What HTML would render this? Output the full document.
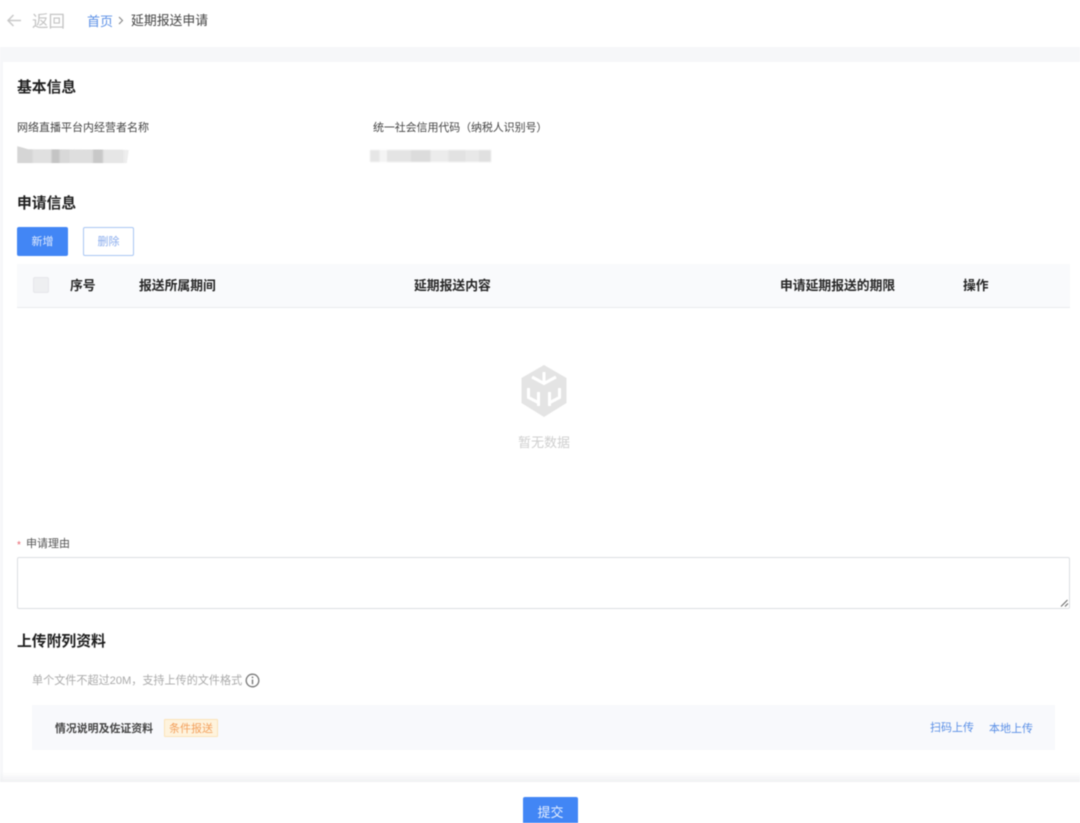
<!DOCTYPE html>
<html lang="zh-CN"><head><meta charset="utf-8"><title>延期报送申请</title>
<style>
html,body{margin:0;padding:0;width:1080px;height:823px;overflow:hidden;background:#fff}
body{position:relative;font-family:"Liberation Sans","Noto Sans CJK SC",sans-serif;color:#333}
.a{position:absolute;white-space:nowrap;line-height:1}
.blk{position:absolute}
#w{position:absolute;left:0;top:0;width:1080px;height:823px;filter:blur(.4px)}
h3{position:absolute;margin:0;font-size:14.8px;font-weight:700;color:#1e1e1e;line-height:1;white-space:nowrap}
.th{position:absolute;top:280px;font-size:12.8px;font-weight:700;color:#262626;line-height:1;white-space:nowrap}
</style></head><body><div id="w">
<div class="blk" style="left:0;top:47px;width:1080px;height:15px;background:#f6f7f9"></div>
<div class="blk" style="left:0;top:62px;width:3px;height:720px;background:#f6f7f9"></div>
<div class="blk" style="left:0;top:772px;width:1080px;height:10px;background:linear-gradient(rgba(241,242,244,0),#f0f1f3)"></div>

<svg class="blk" style="left:6px;top:13px" width="16" height="15" viewBox="0 0 16 15"><path d="M15 7.500H2M7.500 2L2 7.500L7.500 13" fill="none" stroke="#c9c9c9" stroke-width="1.500"/></svg>
<div class="a" style="left:32px;top:14px;font-size:16.500px;line-height:17px;color:#c4c4c4">返回</div>
<div class="a" style="left:87px;top:15px;font-size:13px;color:#5a8fe6">首页</div>
<svg class="blk" style="left:118px;top:16px" width="6" height="9" viewBox="0 0 6 9"><path d="M1 1L4.500 4.500L1 8" fill="none" stroke="#888" stroke-width="1.100"/></svg>
<div class="a" style="left:131px;top:15px;font-size:12.850px;color:#444">延期报送申请</div>

<h3 style="left:17px;top:81px">基本信息</h3>
<div class="a" style="left:17px;top:123px;font-size:11px;color:#444">网络直播平台内经营者名称</div>
<div class="a" style="left:373px;top:123px;font-size:11px;color:#444;letter-spacing:-.11px">统一社会信用代码（纳税人识别号）</div>
<div class="blk" style="left:17px;top:146px;width:112px;height:18px;filter:blur(.8px);background:linear-gradient(90deg,#d5d5d5 0 14%,#e0e0e0 14% 31%,#c4c4c4 31% 38%,#d8d8d8 38% 47%,#dedede 47% 68%,#c8c8c8 68% 77%,#e6e6e6 77% 95%,#eee 95%);clip-path:polygon(0 0,10% 18%,92% 20%,100% 22%,98% 95%,0 95%)"></div>
<div class="blk" style="left:370px;top:150px;width:121px;height:12px;filter:blur(.8px);background:linear-gradient(90deg,#e6e6e6 0 8%,#f4f4f4 8% 14%,#e4e4e4 14% 34%,#dcdcdc 34% 50%,#ececec 50% 65%,#e2e2e2 65% 79%,#e8e8e8 79% 90%,#e0e0e0 90%)"></div>

<h3 style="left:17px;top:197px">申请信息</h3>
<div class="a" style="left:17px;top:227px;width:51px;height:29px;line-height:30px;text-align:center;background:#4286f5;border-radius:2px;color:#dfeafd;font-size:11px">新增</div>
<div class="a" style="left:83px;top:227px;width:49px;height:27px;line-height:28px;text-align:center;background:#fff;border:1px solid #a9c6f4;border-radius:2px;color:#8aaced;font-size:11px">删除</div>

<div class="blk" style="left:17px;top:264px;width:1053px;height:43px;background:#f9fafc;border-bottom:1px solid #e9ebee"></div>
<div class="blk" style="left:33px;top:277px;width:14px;height:14px;background:#eeeff1;border:1px solid #e6e7ea;border-radius:2px"></div>
<div class="th" style="left:70px">序号</div>
<div class="th" style="left:139px">报送所属期间</div>
<div class="th" style="left:414px">延期报送内容</div>
<div class="th" style="left:780px">申请延期报送的期限</div>
<div class="th" style="left:963px">操作</div>

<svg class="blk" style="left:515px;top:360px" width="58" height="62" viewBox="0 0 58 62">
<path d="M29 5L51.500 18V43L29 57L6.500 43V18Z" fill="#e4e4e4"/>
<g fill="none" stroke="#fff" stroke-width="3">
<path d="M17 17L29 23.500L41 17"/><path d="M29 12V23"/>
<path d="M13.500 28V37.500L24 43"/><path d="M23.500 32V46"/>
<path d="M44.500 28V37.500L34 43"/><path d="M34.500 32V46"/>
</g>
</svg>
<div class="a" style="left:518px;top:436px;font-size:13px;color:#cfcfcf">暂无数据</div>

<div class="a" style="left:17px;top:541px;font-size:10px;color:#e8606a">*</div>
<div class="a" style="left:26px;top:539px;font-size:11px;color:#555">申请理由</div>
<div class="blk" style="left:17px;top:557px;width:1051px;height:50px;border:1px solid #dcdee2;border-radius:2px;background:#fff"></div>
<svg class="blk" style="left:1060px;top:599px" width="9" height="8" viewBox="0 0 9 8"><path d="M1 7.500L7.500 1M5 7.500L8 4.500" stroke="#666" stroke-width="1" fill="none"/></svg>

<h3 style="left:17px;top:635px">上传附列资料</h3>
<div class="a" style="left:32px;top:676px;font-size:11.100px;color:#aaa">单个文件不超过20M，支持上传的文件格式</div>
<svg class="blk" style="left:245px;top:673px" width="15" height="15" viewBox="0 0 15 15"><circle cx="7.500" cy="7.500" r="6.300" fill="none" stroke="#777" stroke-width="1.300"/><path d="M7.500 6.500V11.200" stroke="#777" stroke-width="1.400"/><circle cx="7.500" cy="4.400" r=".9" fill="#777"/></svg>

<div class="blk" style="left:32px;top:705px;width:1023px;height:45px;background:#f8f9fc"></div>
<div class="a" style="left:55px;top:724px;font-size:10.900px;font-weight:700;color:#444">情况说明及佐证资料</div>
<div class="a" style="left:164px;top:719px;width:52px;height:16px;line-height:18px;text-align:center;background:#fef3dd;border:1px solid #fbe3b8;border-radius:1px;color:#f3a05c;font-size:11px">条件报送</div>
<div class="a" style="left:930px;top:723px;font-size:11px;color:#5a8fe6">扫码上传</div>
<div class="a" style="left:989px;top:724px;font-size:11px;color:#5a8fe6">本地上传</div>

<div class="a" style="left:523px;top:797px;width:55px;height:26px;line-height:31px;text-align:center;background:#4286f5;border-radius:2px 2px 0 0;color:#e6effe;font-size:13px">提交</div>
</div></body></html>
